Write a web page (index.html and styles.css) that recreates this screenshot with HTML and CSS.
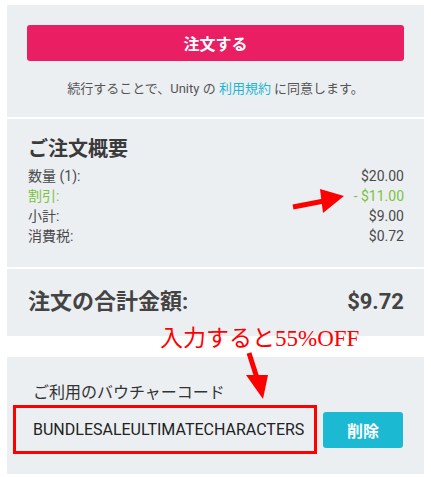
FILE: index.html
```html
<!DOCTYPE html>
<html lang="ja">
<head>
<meta charset="utf-8">
<link rel="stylesheet" href="styles.css">
</head>
<body>
<div class="page">
  <div class="card">
    <section class="sec sec-order">
      <button class="btn-order">注文する</button>
      <p class="terms">続行することで、Unity の <a class="link">利用規約</a> に同意します。</p>
    </section>
    <section class="sec sec-summary">
      <h2 class="sum-title">ご注文概要</h2>
      <div class="row"><span>数量 (1):</span><span>$20.00</span></div>
      <div class="row green"><span>割引:</span><span>- $11.00</span></div>
      <div class="row"><span>小計:</span><span>$9.00</span></div>
      <div class="row"><span>消費税:</span><span>$0.72</span></div>
    </section>
    <section class="sec sec-total">
      <span>注文の合計金額:</span><span>$9.72</span>
    </section>
  </div>
  <div class="card card-voucher">
    <div class="v-label">ご利用のバウチャーコード</div>
    <div class="v-row">
      <div class="v-input">BUNDLESALEULTIMATECHARACTERS</div>
      <button class="btn-del">削除</button>
    </div>
  </div>
  <div class="note">入力すると55%OFF</div>
  <svg class="arrows" width="431" height="477" viewBox="0 0 431 477">
    <line x1="293" y1="207" x2="324" y2="201" stroke="#ff0000" stroke-width="5"/>
    <polygon points="320,189 344,196 323,213" fill="#ff0000"/>
    <line x1="249" y1="353" x2="257" y2="378" stroke="#ff0000" stroke-width="5"/>
    <polygon points="246,375 268,375 263,399" fill="#ff0000"/>
  </svg>
</div>
</body>
</html>
```

FILE: styles.css
```css
* { box-sizing: border-box; }
html, body { margin: 0; padding: 0; background: #fff; }
body {
  font-family: Roboto, "Noto Sans CJK JP", sans-serif;
  color: #555;
}
.page { position: relative; width: 431px; height: 477px; padding: 5px 7px 0; }
.card { background: #eceff2; width: 417px; }
.sec { border-bottom: 2px solid #fff; }
.sec:last-child { border-bottom: none; }
.sec-order { padding: 20px 20px 19px; }
.btn-order {
  display: block; width: 100%; height: 36px; border: none; border-radius: 3px;
  background: #e91e63; color: #fff; font-family: inherit; font-size: 16px; font-weight: 700;
}
.terms { margin: 19px 0 0; text-align: center; font-size: 13px; line-height: 18px; color: #555; }
.link { color: #1fb6d1; }
.sec-summary { padding: 17px 20px 21px 21px; }
.sum-title { margin: 0 0 4px; font-size: 20px; line-height: 26px; font-weight: 700; color: #3a3a3a; }
.row { display: flex; justify-content: space-between; font-size: 14px; line-height: 20px; color: #4a4a4a; }
.row.green { color: #7dc241; }
.sec-total {
  display: flex; justify-content: space-between; align-items: center;
  padding: 19px 20px 20px 21px; font-size: 22px; line-height: 28px; font-weight: 700; color: #444;
}
.card-voucher { margin-top: 21px; padding: 25px 20px 19px 6px; height: 117px; }
.v-label { padding-left: 20px; font-size: 16px; line-height: 22px; color: #333; }
.v-row { display: flex; align-items: center; gap: 6px; margin-top: 1px; }
.v-input {
  width: 304px; height: 49px; border: 3px solid #ff0000; padding-left: 17px;
  display: flex; align-items: center; font-size: 16px; color: #222; white-space: nowrap;
}
.btn-del {
  width: 80px; height: 36px; border: none; border-radius: 3px; background: #1cb9d3;
  color: #fff; font-family: inherit; font-size: 16px; font-weight: 700;
}
.note {
  position: absolute; left: 160px; top: 324px;
  font-family: "Liberation Serif", "Noto Sans CJK JP", serif; font-size: 23px; line-height: 30px; color: #ff0000;
}
.arrows { position: absolute; left: 0; top: 0; pointer-events: none; }
```
